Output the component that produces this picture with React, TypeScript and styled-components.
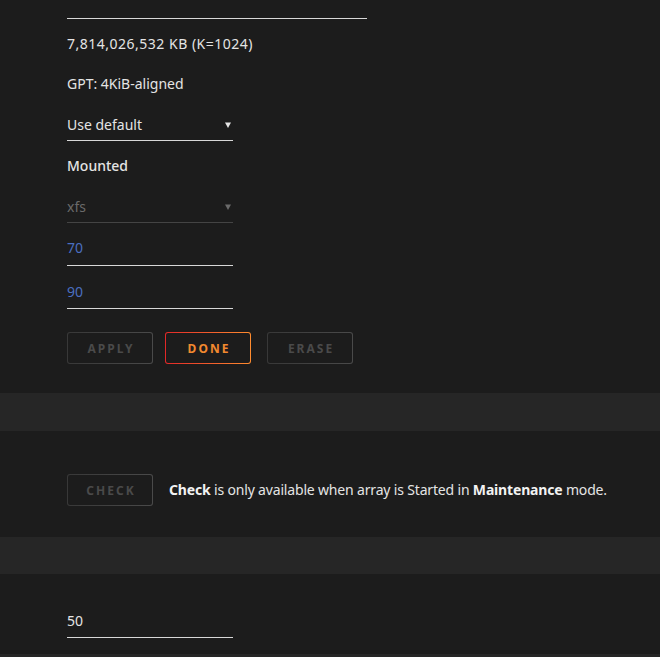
import React from 'react';
import styled, { createGlobalStyle, css } from 'styled-components';

const GlobalStyle = createGlobalStyle`
	html, body {
		margin: 0;
		padding: 0;
		background: #1c1c1c;
	}
	body {
		font-family: 'Noto Sans', 'Open Sans', sans-serif;
		font-size: 14px;
		color: #e4e4e4;
	}
`;

const Page = styled.div`
	display: flex;
	flex-direction: column;
	background: #1c1c1c;
`;

const Section = styled.section<{ $top: number; $bottom: number }>`
	display: flex;
	flex-direction: column;
	align-items: flex-start;
	padding: ${(p) => p.$top}px 0 ${(p) => p.$bottom}px 67px;
	background: #1c1c1c;
`;

const Band = styled.div<{ $height: number }>`
	height: ${(p) => p.$height}px;
	background: #262626;
`;

const TopLine = styled.div`
	width: 300px;
	height: 18px;
	border-bottom: 1px solid #d8d8d8;
`;

const Label = styled.div<{ $gap: number; $bold?: boolean; $wide?: boolean }>`
	margin-top: ${(p) => p.$gap}px;
	line-height: 20px;
	font-weight: ${(p) => (p.$bold ? 500 : 400)};
	letter-spacing: ${(p) => (p.$wide ? '0.5px' : 'normal')};
	color: #e4e4e4;
`;

const Field = styled.div<{ $gap: number; $pad: number; $muted?: boolean }>`
	display: flex;
	align-items: center;
	justify-content: space-between;
	box-sizing: border-box;
	width: 166px;
	margin-top: ${(p) => p.$gap}px;
	padding: 0 2px ${(p) => p.$pad}px 0;
	line-height: 20px;
	border-bottom: 1px solid ${(p) => (p.$muted ? '#444' : '#d8d8d8')};
	color: ${(p) => (p.$muted ? '#6a6a6a' : '#e4e4e4')};
`;

const NumberValue = styled.span<{ $tone?: 'blue' | 'plain' }>`
	color: ${(p) => (p.$tone === 'blue' ? '#4a6fc0' : '#e4e4e4')};
`;

const Caret = ({ color }: { color: string }) => (
	<svg width="6" height="6" viewBox="0 0 6 6">
		<path d="M0 0.5 L6 0.5 L3 6 Z" fill={color} />
	</svg>
);

const ButtonRow = styled.div`
	display: flex;
	gap: 12px;
	margin-top: 23px;
`;

const Button = styled.button<{ $variant?: 'primary' | 'disabled' }>`
	width: 86px;
	height: 32px;
	box-sizing: border-box;
	border-radius: 3px;
	border: 1px solid transparent;
	font-family: 'Noto Sans', sans-serif;
	font-size: 12px;
	font-weight: 700;
	letter-spacing: 2px;
	text-transform: uppercase;
	padding: 0 0 0 2px;
	${(p) =>
		p.$variant === 'primary'
			? css`
					color: #f2892f;
					background: linear-gradient(#1c1c1c, #1c1c1c) padding-box,
						linear-gradient(90deg, #e22828, #ff8c2f) border-box;
				`
			: css`
					color: #4a4a4a;
					background: linear-gradient(#1c1c1c, #1c1c1c) padding-box,
						linear-gradient(90deg, #383838, #4a4a4a) border-box;
				`}
`;

const EraseButton = styled(Button)`
	margin-left: 4px;
`;

const CheckRow = styled.div`
	display: flex;
	align-items: center;
	gap: 16px;
`;

const Note = styled.p`
	margin: 0;
	line-height: 20px;
	letter-spacing: -0.17px;
	color: #e4e4e4;

	strong {
		font-weight: 700;
		color: #f2f2f2;
	}
`;

export default function App() {
	return (
		<Page>
			<GlobalStyle />
			<Section $top={0} $bottom={29}>
				<TopLine />
				<Label $gap={15} $wide>
					7,814,026,532 KB (K=1024)
				</Label>
				<Label $gap={20}>GPT: 4KiB-aligned</Label>
				<Field $gap={21} $pad={5}>
					<span>Use default</span>
					<Caret color="#e4e4e4" />
				</Field>
				<Label $gap={15} $bold>
					Mounted
				</Label>
				<Field $gap={21} $pad={5} $muted>
					<span>xfs</span>
					<Caret color="#6a6a6a" />
				</Field>
				<Field $gap={15} $pad={7}>
					<NumberValue $tone="blue">70</NumberValue>
				</Field>
				<Field $gap={16} $pad={6}>
					<NumberValue $tone="blue">90</NumberValue>
				</Field>
				<ButtonRow>
					<Button $variant="disabled" disabled>
						Apply
					</Button>
					<Button $variant="primary">Done</Button>
					<EraseButton $variant="disabled" disabled>
						Erase
					</EraseButton>
				</ButtonRow>
			</Section>
			<Band $height={38} />
			<Section $top={43} $bottom={31}>
				<CheckRow>
					<Button $variant="disabled" disabled>
						Check
					</Button>
					<Note>
						<strong>Check</strong> is only available when array is Started in{' '}
						<strong>Maintenance</strong> mode.
					</Note>
				</CheckRow>
			</Section>
			<Band $height={37} />
			<Section $top={37} $bottom={16}>
				<Field $gap={0} $pad={6}>
					<NumberValue>50</NumberValue>
				</Field>
			</Section>
			<Band $height={3} />
		</Page>
	);
}
